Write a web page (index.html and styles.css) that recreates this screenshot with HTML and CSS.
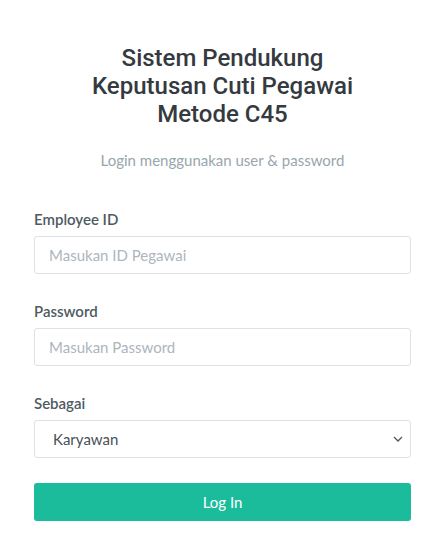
FILE: index.html
```html
<!DOCTYPE html>
<html lang="id">
<head>
<meta charset="utf-8">
<title>Login</title>
<link rel="stylesheet" href="styles.css">
</head>
<body>
<main class="card">
  <h1 class="title">Sistem Pendukung<br>Keputusan Cuti Pegawai<br>Metode C45</h1>
  <p class="subtitle">Login menggunakan user &amp; password</p>
  <form class="form">
    <div class="field">
      <label class="label" for="eid">Employee ID</label>
      <input class="control" id="eid" type="text" placeholder="Masukan ID Pegawai">
    </div>
    <div class="field">
      <label class="label" for="pw">Password</label>
      <input class="control" id="pw" type="password" placeholder="Masukan Password">
    </div>
    <div class="field field-last">
      <label class="label" for="role">Sebagai</label>
      <div class="select-wrap">
        <select class="control select" id="role">
          <option>Karyawan</option>
        </select>
        <svg class="chev" width="10" height="6" viewBox="0 0 10 6"><path d="M1 1l4 4 4-4" fill="none" stroke="#555" stroke-width="1.3"/></svg>
      </div>
    </div>
    <button class="btn" type="button">Log In</button>
  </form>
</main>
</body>
</html>
```
FILE: styles.css
```css
* { box-sizing: border-box; }
html, body { margin: 0; padding: 0; background: #fff; }
body { font-family: "Lato", "Noto Sans", sans-serif; color: #6c757d; }
.card { padding: 44px 34px 0 34px; }
.title {
  margin: 0;
  font-family: "Roboto", sans-serif;
  font-weight: 500;
  font-size: 24px;
  line-height: 28px;
  color: #343a40;
  text-align: center;
}
.subtitle {
  margin: 22px 0 0;
  text-align: center;
  font-size: 15px;
  line-height: 20px;
  color: #98a6ad;
}
.form { margin-top: 39px; display: flex; flex-direction: column; }
.field { display: flex; flex-direction: column; margin-bottom: 27px; }
.field-last { margin-bottom: 25px; }
.label {
  font-size: 15px;
  line-height: 20px;
  font-weight: 600;
  color: #4e5a62;
  margin-bottom: 7px;
}
.control {
  height: 38px;
  width: 100%;
  border: 1px solid #dee2e6;
  border-radius: 3px;
  padding: 0 14px;
  font-family: inherit;
  font-size: 15px;
  color: #495057;
  background: #fff;
  outline: none;
}
.control::placeholder { color: #adb5bd; }
.select-wrap { position: relative; }
.select { appearance: none; -webkit-appearance: none; padding-left: 18px; }
.chev { position: absolute; right: 8px; top: 16px; pointer-events: none; }
.btn {
  margin-top: 0;
  height: 38px;
  width: 100%;
  border: none;
  border-radius: 3px;
  background: #1abc9c;
  color: #fff;
  font-family: inherit;
  font-size: 15px;
}
```
